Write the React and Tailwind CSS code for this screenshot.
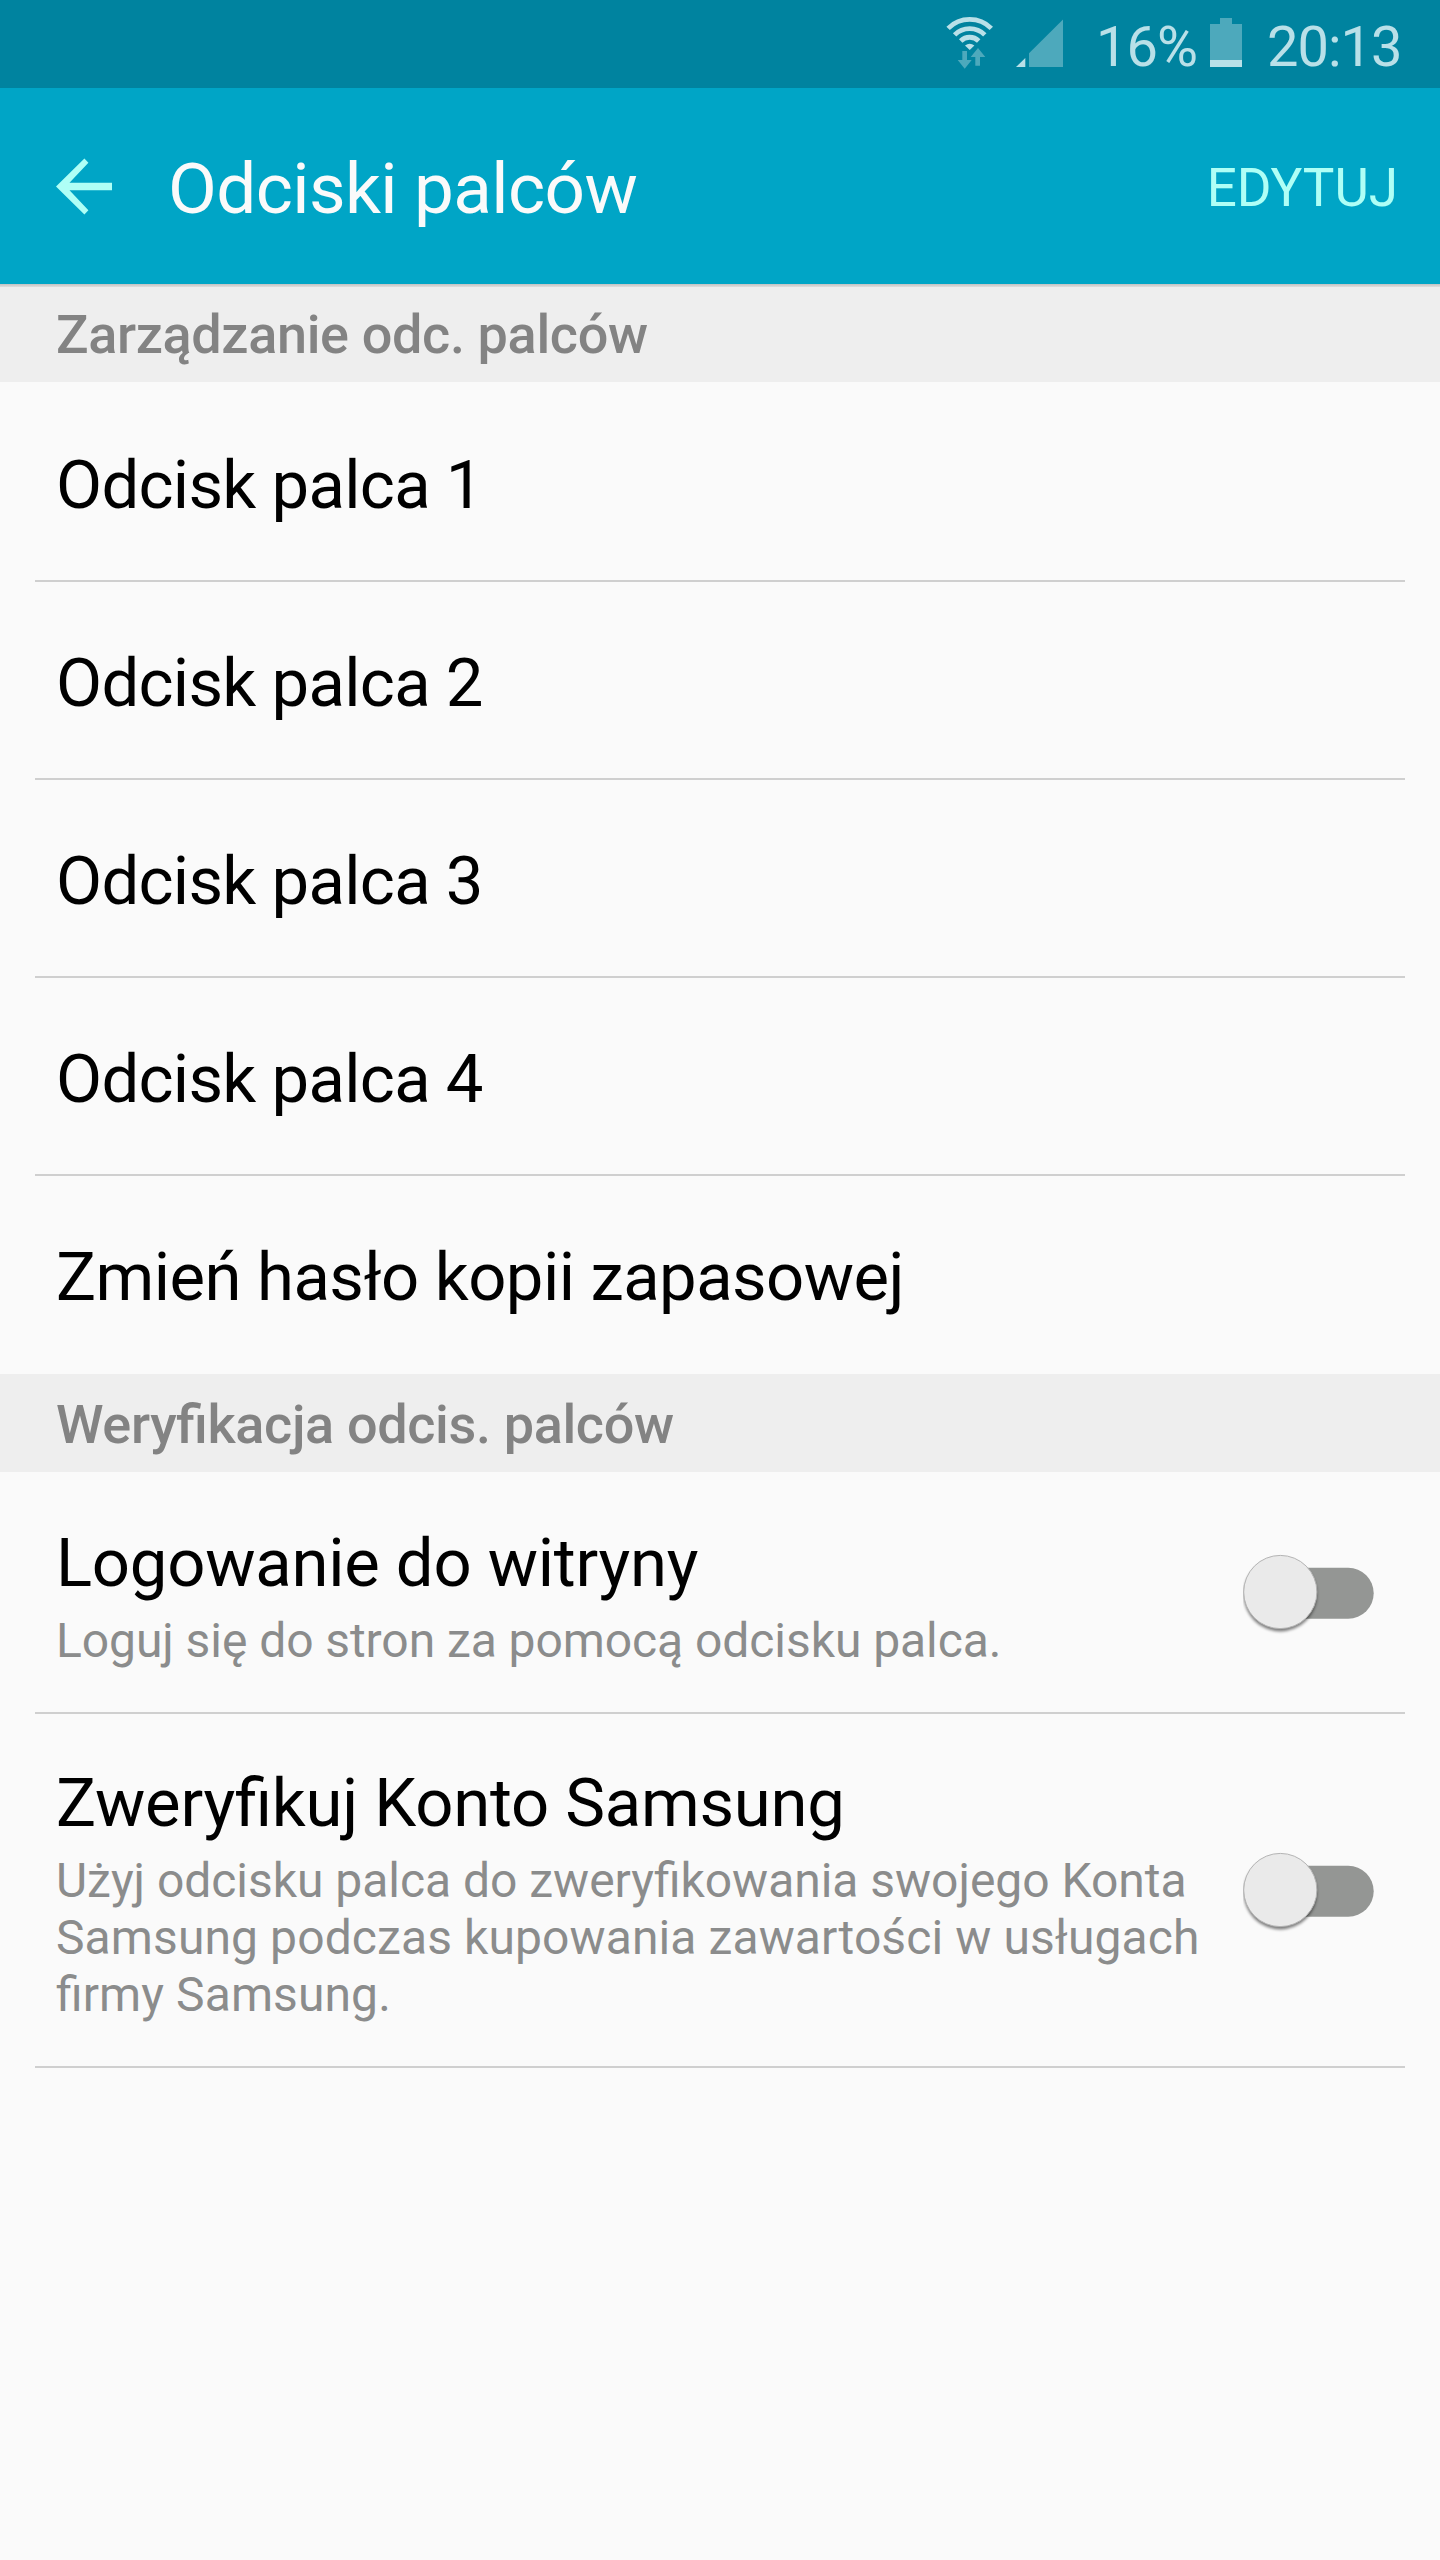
import React from "react";

const prints = ["Odcisk palca 1", "Odcisk palca 2", "Odcisk palca 3", "Odcisk palca 4"];

function SectionHeader({ children }) {
  return (
    <h2 className="flex h-[98px] items-center bg-[#eeeeee] px-14 pt-[3px] text-[54px] font-medium leading-[62px] tracking-[-0.35px] text-[#838383] [font-feature-settings:'liga'_1]">
      {children}
    </h2>
  );
}

function StatusBar() {
  return (
    <div className="flex h-[88px] shrink-0 bg-[#00839f] pl-[946px] text-[56px] leading-[88px] tracking-[-1px] text-[#b9e0e8]">
      <svg width="48" height="88" viewBox="946 0 48 88" className="shrink-0">
        <g fill="none" stroke="#b9e0e8" strokeWidth="4.8">
          <path d="M948.1 28.4A30.6 30.6 0 0 1 991.3 28.4" />
          <path d="M954.6 34.9A21.4 21.4 0 0 1 984.8 34.9" />
          <path d="M960.7 41A12.7 12.7 0 0 1 978.7 41" />
        </g>
        <path d="M969.7 50L965 45.6Q969.7 41.8 974.4 45.6Z" fill="#b9e0e8" />
        <path d="M962.3 51H967V60H971.7L964.7 68.7L957.7 60H962.3Z" fill="#4da9bc" />
        <path d="M978 48L985.3 57H980V65.7H975.3V57H970.7Z" fill="#4da9bc" />
      </svg>
      <svg width="48" height="88" viewBox="1016 0 48 88" className="ml-[22px] shrink-0">
        <path d="M1016 67L1025.3 58V67Z" fill="#b9e0e8" />
        <path d="M1029 67V53.3L1063 19.5V67Z" fill="#4da9bc" />
      </svg>
      <span className="ml-8 w-[114px] shrink-0 pt-[3px]">16%</span>
      <svg width="32" height="88" viewBox="0 0 32 88" className="shrink-0">
        <path d="M0 60V24H10V18H22V24H32V60Z" fill="#4da9bc" />
        <path d="M0 60H32V67H0Z" fill="#b9e0e8" />
      </svg>
      <span className="ml-[25px] shrink-0 pt-[3px]">20:13</span>
    </div>
  );
}

function Switch() {
  return (
    <svg width="140" height="90" viewBox="0 0 140 90" className="shrink-0 self-center">
      <defs>
        <filter id="knob" x="-20%" y="-20%" width="140%" height="140%">
          <feGaussianBlur stdDeviation="1.6" />
        </filter>
      </defs>
      <rect x="20" y="20.7" width="110.7" height="51" rx="25.5" fill="#949694" />
      <circle cx="37.3" cy="47.8" r="36.6" fill="#000" opacity="0.5" filter="url(#knob)" />
      <circle cx="37.3" cy="45" r="36.6" fill="#eaeaea" stroke="#b4b4b4" strokeWidth="1" />
    </svg>
  );
}

function SwitchRow({ title, children, className }) {
  return (
    <div className={`mx-[35px] flex justify-between border-b-2 border-[#cfcfcf] pl-[21px] pr-[22px] ${className}`}>
      <div className="[font-feature-settings:'liga'_1]">
        <div className="text-[67px] leading-[80px] tracking-[-0.25px]">{title}</div>
        <div className="mt-[9px] whitespace-nowrap text-[48px] leading-[57px] text-[#8b8c8c]">{children}</div>
      </div>
      <Switch />
    </div>
  );
}

export default function App() {
  return (
    <div className="flex h-[2560px] w-[1440px] flex-col overflow-hidden bg-[#fafafa] font-[Roboto,sans-serif] text-black">
      <StatusBar />
      <header className="flex h-[196px] shrink-0 items-center justify-between bg-[#00a5c6] pl-14 pr-[42px]">
        <div className="flex items-center">
          <svg width="57" height="57" viewBox="56 157.5 57 57" fill="#affff6">
            <path d="M56 186L84.4 158L88.4 162.3L69.5 182.3H112V189.7H69.5L88.4 209.7L84.4 214Z" />
          </svg>
          <h1 className="ml-[55px] pt-[5px] text-[71px] leading-[84px] tracking-[-0.6px] text-[#fafafa]">Odciski palców</h1>
        </div>
        <button className="pt-[4px] text-[53px] leading-[62px] text-[#affff6]">EDYTUJ</button>
      </header>
      <div className="relative">
        <div className="absolute inset-x-0 top-0 h-[3px] bg-linear-to-b from-[#c2c2c2] to-[#dedede]" />
        <SectionHeader>Zarządzanie odc. palców</SectionHeader>
      </div>
      <div className="flex flex-col">
        {prints.map((p) => (
          <div key={p} className="mx-[35px] flex h-[198px] items-end border-b-2 border-[#cfcfcf] px-[21px] pb-[55px] text-[67px] leading-[80px] tracking-[-0.7px] first:h-[200px]">
            {p}
          </div>
        ))}
        <div className="flex h-[198px] items-end px-14 pb-[57px] text-[67px] leading-[80px] tracking-[-0.54px]">
          Zmień hasło kopii zapasowej
        </div>
      </div>
      <SectionHeader>Weryfikacja odcis. palców</SectionHeader>
      <SwitchRow className="h-[242px] [&>div]:pt-[51px]" title="Logowanie do witryny">
        <div className="tracking-[-0.07px]">Loguj się do stron za pomocą odcisku palca.</div>
      </SwitchRow>
      <SwitchRow className="h-[354px] [&>div]:pt-[49px]" title="Zweryfikuj Konto Samsung">
        <div className="tracking-[-0.03px]">Użyj odcisku palca do zweryfikowania swojego Konta</div>
        <div className="tracking-[0.1px]">Samsung podczas kupowania zawartości w usługach</div>
        <div className="tracking-[0.1px]">firmy Samsung.</div>
      </SwitchRow>
    </div>
  );
}
